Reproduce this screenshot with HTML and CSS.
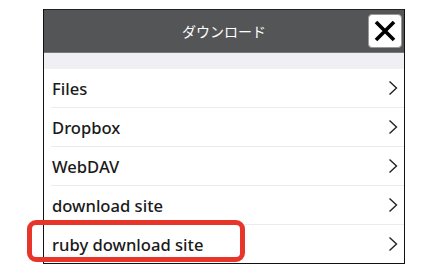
FILE: index.html
```html
<!DOCTYPE html>
<html lang="ja">
<head>
    <meta charset="UTF-8">
    <title>ダウンロード</title>
    <link rel="stylesheet" href="styles.css">
</head>
<body>
<div class="dialog">
    <div class="header">
        <span class="title">ダウンロード</span>
        <button class="closeBtn" aria-label="close">
            <svg width="24" height="24" viewBox="0 0 24 24"><path d="M3 3 L21 21 M21 3 L3 21" stroke="#000" stroke-width="3.6" stroke-linecap="butt"/></svg>
        </button>
    </div>
    <div class="band"></div>
    <ul class="list">
        <li class="row"><span>Files</span><svg class="chev" width="10" height="16" viewBox="0 0 10 16"><path d="M1.5 1.5 L8.5 8 L1.5 14.5" fill="none" stroke="#222" stroke-width="1.4"/></svg></li>
        <li class="row"><span>Dropbox</span><svg class="chev" width="10" height="16" viewBox="0 0 10 16"><path d="M1.5 1.5 L8.5 8 L1.5 14.5" fill="none" stroke="#222" stroke-width="1.4"/></svg></li>
        <li class="row"><span>WebDAV</span><svg class="chev" width="10" height="16" viewBox="0 0 10 16"><path d="M1.5 1.5 L8.5 8 L1.5 14.5" fill="none" stroke="#222" stroke-width="1.4"/></svg></li>
        <li class="row"><span>download site</span><svg class="chev" width="10" height="16" viewBox="0 0 10 16"><path d="M1.5 1.5 L8.5 8 L1.5 14.5" fill="none" stroke="#222" stroke-width="1.4"/></svg></li>
        <li class="row"><span>ruby download site</span><svg class="chev" width="10" height="16" viewBox="0 0 10 16"><path d="M1.5 1.5 L8.5 8 L1.5 14.5" fill="none" stroke="#222" stroke-width="1.4"/></svg></li>
    </ul>
</div>
<div class="highlight"></div>
</body>
</html>
```
FILE: styles.css
```css
body {
    margin: 0;
    background-color: #ffffff;
    font-family: "Noto Sans", "Noto Sans CJK JP", sans-serif;
    color: #1a1a1a;
}

.dialog {
    margin: 9px 0 0 43px;
    width: 360px;
    border: 1px solid #111;
    border-top: none;
}

.header {
    height: 42px;
    background-color: #545557; /* dark title bar */
    border-top: 1px solid #222;
    border-bottom: 1px solid #77797b;
    display: flex;
    align-items: center;
    justify-content: center;
    position: relative;
}

.title {
    color: #ffffff;
    font-size: 14px;
    font-family: "Noto Sans CJK JP", sans-serif;
}

.closeBtn {
    position: absolute;
    right: 2px;
    top: 4px;
    width: 34px;
    height: 34px;
    background-color: #ffffff;
    border: 1px solid #999;
    border-radius: 4px;
    padding: 0;
    display: flex;
    align-items: center;
    justify-content: center;
}

.band {
    height: 16px;
    background-color: #efeff4; /* light gray spacer */
}

.list {
    list-style: none;
    margin: 0;
    padding: 0 0 0 7px;
}

.row {
    height: 38px;
    display: flex;
    align-items: center;
    justify-content: space-between;
    padding-right: 6px;
    font-size: 16.6px;
    font-weight: 500;
    border-bottom: 1px solid #ececec;
}

.row:last-child {
    border-bottom: none;
}

.row span {
    padding-left: 1px;
}

.highlight {
    position: absolute;
    left: 27px;
    top: 220px;
    width: 208px;
    height: 32px;
    border: 5px solid #e8352a;
    border-radius: 9px;
}
```
